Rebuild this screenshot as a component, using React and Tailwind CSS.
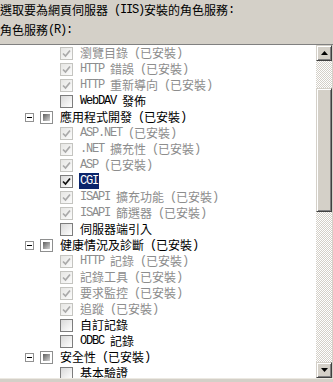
import React from 'react';

const rows = [
  { lv: 2, st: 'cd', t: '瀏覽目錄 (已安裝)' },
  { lv: 2, st: 'cd', t: 'HTTP 錯誤 (已安裝)' },
  { lv: 2, st: 'cd', t: 'HTTP 重新導向 (已安裝)' },
  { lv: 2, st: 'off', t: 'WebDAV 發佈' },
  { lv: 1, st: 'mix', t: '應用程式開發 (已安裝)' },
  { lv: 2, st: 'cd', t: 'ASP.NET (已安裝)' },
  { lv: 2, st: 'cd', t: '.NET 擴充性 (已安裝)' },
  { lv: 2, st: 'cd', t: 'ASP (已安裝)' },
  { lv: 2, st: 'on', t: 'CGI', sel: true },
  { lv: 2, st: 'cd', t: 'ISAPI 擴充功能 (已安裝)' },
  { lv: 2, st: 'cd', t: 'ISAPI 篩選器 (已安裝)' },
  { lv: 2, st: 'off', t: '伺服器端引入' },
  { lv: 1, st: 'mix', t: '健康情況及診斷 (已安裝)' },
  { lv: 2, st: 'cd', t: 'HTTP 記錄 (已安裝)' },
  { lv: 2, st: 'cd', t: '記錄工具 (已安裝)' },
  { lv: 2, st: 'cd', t: '要求監控 (已安裝)' },
  { lv: 2, st: 'cd', t: '追蹤 (已安裝)' },
  { lv: 2, st: 'off', t: '自訂記錄' },
  { lv: 2, st: 'off', t: 'ODBC 記錄' },
  { lv: 1, st: 'mix', t: '安全性 (已安裝)' },
  { lv: 2, st: 'off', t: '基本驗證' },
];

// latin runs get the narrow courier-ish face, CJK stays in Noto
const Txt = ({ s }) =>
  s
    .split(/([\x20-\x7e]+)/)
    .filter(Boolean)
    .map((p, i) =>
      /[\x20-\x7e]/.test(p[0]) ? (
        <span key={i} className="font-['Liberation_Mono',monospace] tracking-[-1.2px] whitespace-pre">
          {p}
        </span>
      ) : (
        <span key={i}>{p}</span>
      )
    );

const Tick = ({ color }) => (
  <svg width="11" height="11" viewBox="0 0 11 11" className="block">
    <polyline points="2,5.5 4.5,8 9,2.5" fill="none" stroke={color} strokeWidth="1.7" />
  </svg>
);

const Check = ({ st }) => {
  if (st === 'mix') {
    return (
      <div className="w-[13px] h-[13px] border border-[#8e8f8f] bg-white flex items-center justify-center">
        <div className="w-[7px] h-[7px] bg-gradient-to-br from-[#5f5f5f] to-[#d6d6d6]" />
      </div>
    );
  }
  if (st === 'cd') {
    return (
      <div className="w-[13px] h-[13px] border border-[#c4c4c0] bg-gradient-to-br from-[#e6e6e4] to-[#fbfbfb] flex items-center justify-center">
        <Tick color="#a9a9a9" />
      </div>
    );
  }
  return (
    <div className="w-[13px] h-[13px] border border-[#7d7d7d] bg-gradient-to-br from-[#d9d9d9] to-white flex items-center justify-center">
      {st === 'on' && <Tick color="#111" />}
    </div>
  );
};

const Expander = () => (
  <div className="w-[9px] h-[9px] border border-[#919191] bg-white flex items-center justify-center">
    <div className="w-[5px] h-[1px] bg-black" />
  </div>
);

const Arrow = ({ down }) => (
  <svg width="7" height="4" viewBox="0 0 7 4" className="block">
    <polygon points={down ? '0,0 7,0 3.5,4' : '0,4 7,4 3.5,0'} fill="#000" />
  </svg>
);

const btn =
  'bg-[#d4d0c8] border border-t-[#d4d0c8] border-l-[#d4d0c8] border-r-[#404040] border-b-[#404040] shadow-[inset_1px_1px_#fff,inset_-1px_-1px_#808080]';

const App = () => {
  return (
    <div className="w-[333px] h-[382px] bg-[#d4d0c8] overflow-hidden text-[12px] text-black font-['Noto_Sans_CJK_TC',sans-serif]">
      <div className="h-[44px] pt-[2px] flex flex-col gap-[4px]">
        <div className="h-[16px] leading-[16px] flex items-center whitespace-nowrap">
          <Txt s="選取要為網頁伺服器 (IIS)安裝的角色服務:" />
        </div>
        <div className="h-[16px] leading-[16px] flex items-center whitespace-nowrap">
          <Txt s="角色服務(R):" />
        </div>
      </div>

      <div className="h-[335px] border-t border-t-[#808080] border-b border-b-[#ece9e2] flex">
        <div className="w-[316px] bg-white overflow-hidden">
          {rows.map((r, i) => (
            <div
              key={i}
              className={`h-[16px] flex items-center whitespace-nowrap ${r.lv === 1 ? 'pl-[25px]' : 'pl-[60px]'}`}
            >
              {r.lv === 1 && (
                <div className="mr-[6px]">
                  <Expander />
                </div>
              )}
              <Check st={r.st} />
              <div
                className={`ml-[6px] h-[16px] leading-[16px] px-[1px] flex items-center ${
                  r.sel ? 'bg-[#0a246a] text-white' : r.st === 'cd' ? 'text-[#8d8d8d]' : 'text-black'
                }`}
              >
                <Txt s={r.t} />
              </div>
            </div>
          ))}
        </div>

        <div className="w-[16px] flex flex-col">
          <div className={`h-[16px] flex items-center justify-center ${btn}`}>
            <Arrow />
          </div>
          <div className="h-[27px] bg-[image:repeating-conic-gradient(#d4d0c8_0_25%,#ffffff_0_50%)] bg-[length:2px_2px]" />
          <div className={`h-[124px] ${btn}`} />
          <div className="flex-1 bg-[image:repeating-conic-gradient(#d4d0c8_0_25%,#ffffff_0_50%)] bg-[length:2px_2px]" />
          <div className={`h-[16px] flex items-center justify-center ${btn}`}>
            <Arrow down />
          </div>
        </div>
        <div className="w-[1px] bg-[#d4d0c8]" />
      </div>
    </div>
  );
};

export default App;
